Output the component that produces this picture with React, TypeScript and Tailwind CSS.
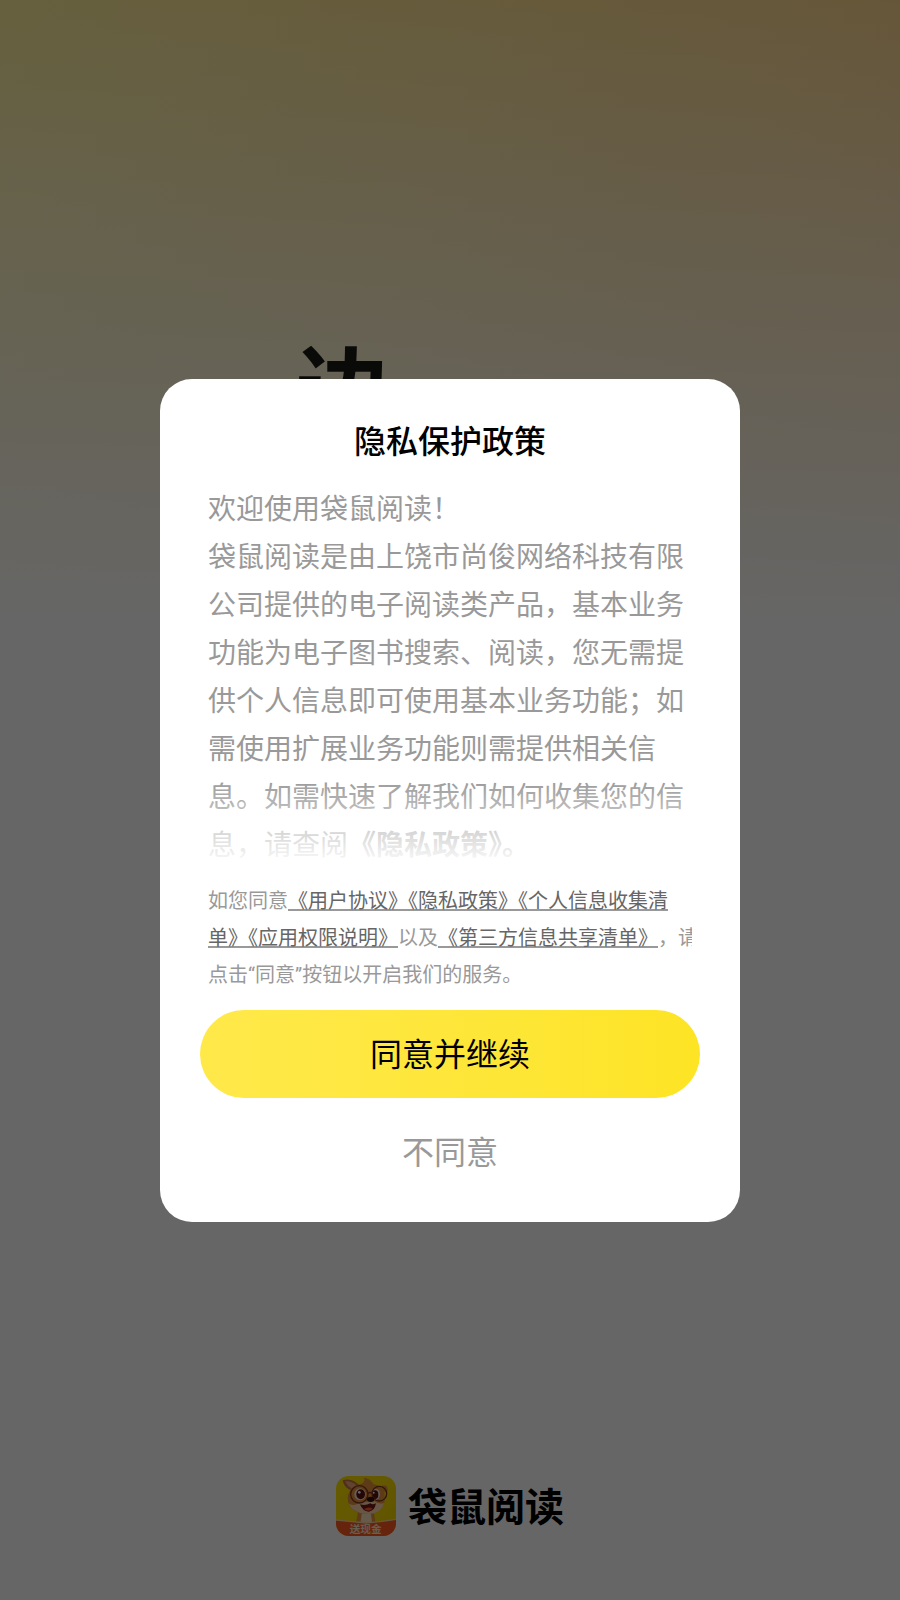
import { useState } from "react";

const links = {
  user: "#user-agreement",
  privacy: "#privacy",
  collect: "#collect",
  permission: "#permission",
  share: "#share",
};

function AppIcon() {
  return (
    <svg viewBox="0 0 180 180" className="size-15" aria-hidden="true">
      <defs>
        <clipPath id="iconClip">
          <rect width="180" height="180" rx="38" />
        </clipPath>
        <linearGradient id="iconBg" x1="0" y1="0" x2="1" y2="1">
          <stop offset="0" stopColor="#ffe400" />
          <stop offset="1" stopColor="#f2d000" />
        </linearGradient>
      </defs>
      <g clipPath="url(#iconClip)">
        <rect width="180" height="180" fill="url(#iconBg)" />
        {/* ears */}
        <path d="M20 13C40 6 62 16 74 34L50 46C36 40 22 30 20 13Z" fill="#c87840" />
        <path d="M28 16C42 14 58 22 66 34L52 40C40 35 31 27 28 16Z" fill="#f0a878" />
        <path d="M138 30C150 26 158 32 154 46L142 50Z" fill="#e8923c" />
        {/* body */}
        <path d="M68 98L112 98L120 150L58 150Z" fill="#e8923c" />
        <path d="M78 108L104 108L110 150L72 150Z" fill="#ffe0b8" />
        {/* head */}
        <path d="M84 6C96 6 108 14 112 24C134 28 148 42 146 62C150 90 128 112 98 114C62 114 38 98 36 74C32 52 46 30 72 25C82 22 88 16 84 6Z" fill="#e8923c" />
        <path d="M38 82C50 92 64 84 76 78L116 76C126 84 138 84 145 80C139 102 122 113 98 114C66 114 44 102 38 82Z" fill="#ffd8a8" />
        {/* eyes and glasses */}
        <ellipse cx="72" cy="55" rx="17" ry="18" fill="#ffe8d8" />
        <ellipse cx="119" cy="55" rx="13" ry="17" fill="#ffe8d8" />
        <ellipse cx="74" cy="55" rx="13" ry="15" fill="#5a1010" />
        <ellipse cx="117" cy="56" rx="10" ry="13" fill="#5a1010" />
        <circle cx="70" cy="49" r="4" fill="#fff" />
        <circle cx="113" cy="50" r="3" fill="#fff" />
        <g fill="none" stroke="#80381c" strokeWidth="4">
          <circle cx="70" cy="55" r="26" />
          <circle cx="130" cy="53" r="22" />
          <path d="M96 52Q102 47 108 52" />
        </g>
        {/* nose and mouth */}
        <ellipse cx="104" cy="70" rx="11" ry="8" fill="#301010" />
        <path d="M72 85Q88 90 103 82Q110 88 120 82Q116 105 98 107Q80 106 72 85Z" fill="#701818" />
        <path d="M84 99Q98 90 110 98Q98 110 84 99Z" fill="#ff5a30" />
        {/* banner */}
        <path d="M0 130Q50 136 90 138Q130 136 180 128V180H0Z" fill="#ffd8a0" />
        <path d="M0 134Q48 138 90 143Q130 140 180 132V180H0Z" fill="#ff5a20" />
        <text x="89" y="171" textAnchor="middle" fontSize="32" fontWeight="700" fill="#ffe6c8" fontFamily="'Noto Sans CJK SC', sans-serif">
          送现金
        </text>
      </g>
    </svg>
  );
}

export default function App() {
  const [open, setOpen] = useState(true);

  return (
    <div className="relative min-h-screen bg-white font-['Noto_Sans_CJK_SC',sans-serif]">
      {/* ================= Splash page ================= */}
      <main className="flex min-h-screen flex-col items-center justify-between bg-[linear-gradient(to_bottom,#ffffff00,#ffffff_620px),linear-gradient(to_right,#fff09c,#ffd890)] pb-16">
        <p className="w-full pt-80 pl-74 text-[92px] leading-32 font-bold text-[#1a1a14]">边</p>

        <div className="flex items-start gap-3">
          <AppIcon />
          <span className="text-[39px] leading-14 font-bold text-black">袋鼠阅读</span>
        </div>
      </main>

      {/* ================= Privacy dialog ================= */}
      {open && (
        <div className="fixed inset-0 flex items-center justify-center bg-black/60">
          <section
            role="dialog"
            aria-modal="true"
            aria-labelledby="dialog-title"
            className="w-full max-w-[580px] rounded-4xl bg-white px-10 pt-9 pb-8"
          >
            <h1 id="dialog-title" className="text-center text-[32px] leading-12 font-medium text-black">
              隐私保护政策
            </h1>

            <div className="relative mt-5 px-2 text-[28px] leading-12 text-[#999]">
              <p>欢迎使用袋鼠阅读！</p>
              <p>
                袋鼠阅读是由上饶市尚俊网络科技有限公司提供的电子阅读类产品，基本业务功能为电子图书搜索、阅读，您无需提供个人信息即可使用基本业务功能；如需使用扩展业务功能则需提供相关信息。如需快速了解我们如何收集您的信息，请查阅
                <a href={links.privacy} className="font-bold">《隐私政策》。</a>
              </p>
              <div className="pointer-events-none absolute inset-x-0 bottom-0 h-22 bg-linear-to-b from-white/0 to-white" />
            </div>

            <p className="mx-2 mt-4 overflow-hidden font-['Roboto','Noto_Sans_CJK_SC',sans-serif] text-[20px] leading-[37px] whitespace-nowrap text-[#999]">
              如您同意
              <a href={links.user} className="text-[#666] underline decoration-[#999]">《用户协议》</a>
              <a href={links.privacy} className="text-[#666] underline decoration-[#999]">《隐私政策》</a>
              <a href={links.collect} className="text-[#666] underline decoration-[#999]">《个人信息收集清<br />单》</a>
              <a href={links.permission} className="text-[#666] underline decoration-[#999]">《应用权限说明》</a>
              以及
              <a href={links.share} className="text-[#666] underline decoration-[#999] [text-spacing-trim:space-all]">《第三方信息共享清单》</a>
              ，请<br />
              点击“同意”按钮以开启我们的服务。
            </p>

            <button
              type="button"
              onClick={() => setOpen(false)}
              className="mt-4 h-22 w-full rounded-full bg-linear-to-r from-[#ffe94a] to-[#fde424] pb-1 text-[32px] text-black"
            >
              同意并继续
            </button>
            <button type="button" className="mt-3 h-20 w-full text-[32px] text-[#999]">
              不同意
            </button>
          </section>
        </div>
      )}
    </div>
  );
}
